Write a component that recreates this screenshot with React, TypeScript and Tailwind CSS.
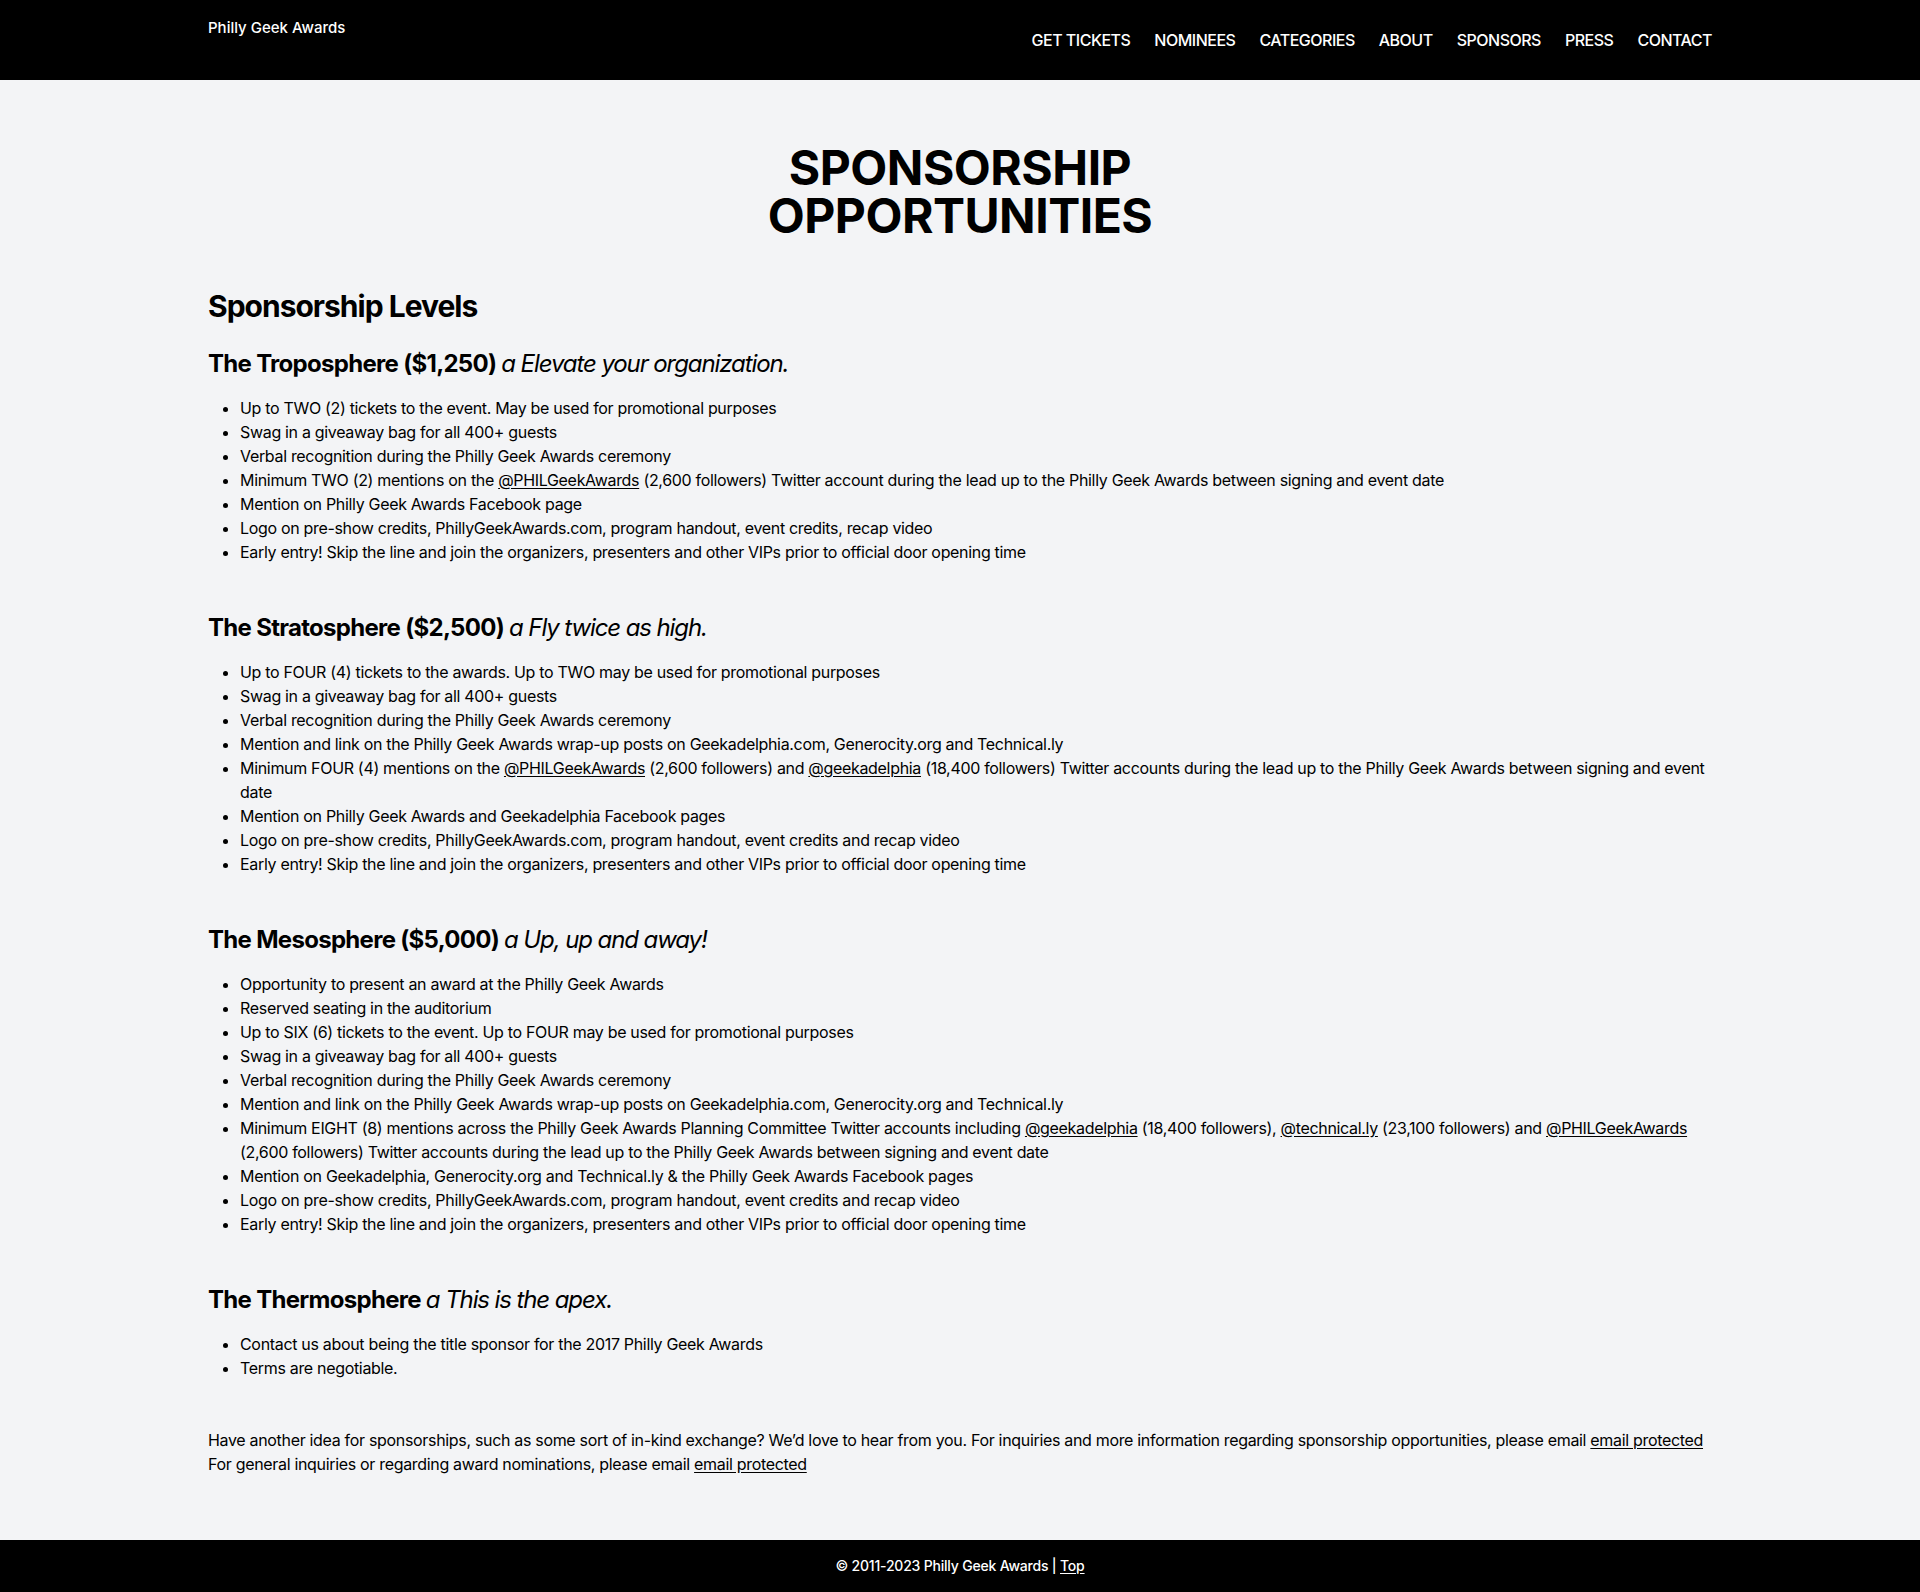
import type { ReactNode } from 'react';

const navLinks = ['GET TICKETS', 'NOMINEES', 'CATEGORIES', 'ABOUT', 'SPONSORS', 'PRESS', 'CONTACT'];

function A({ children }: { children: ReactNode }) {
  return (
    <a href="#" className="underline underline-offset-2">
      {children}
    </a>
  );
}

interface Level {
  name: string;
  tagline: string;
  perks: ReactNode[];
}

const levels: Level[] = [
  {
    name: 'The Troposphere ($1,250)',
    tagline: 'a Elevate your organization.',
    perks: [
      'Up to TWO (2) tickets to the event. May be used for promotional purposes',
      'Swag in a giveaway bag for all 400+ guests',
      'Verbal recognition during the Philly Geek Awards ceremony',
      <>
        Minimum TWO (2) mentions on the <A>@PHILGeekAwards</A> (2,600 followers) Twitter account during the lead up to
        the Philly Geek Awards between signing and event date
      </>,
      'Mention on Philly Geek Awards Facebook page',
      'Logo on pre-show credits, PhillyGeekAwards.com, program handout, event credits, recap video',
      'Early entry! Skip the line and join the organizers, presenters and other VIPs prior to official door opening time',
    ],
  },
  {
    name: 'The Stratosphere ($2,500)',
    tagline: 'a Fly twice as high.',
    perks: [
      'Up to FOUR (4) tickets to the awards. Up to TWO may be used for promotional purposes',
      'Swag in a giveaway bag for all 400+ guests',
      'Verbal recognition during the Philly Geek Awards ceremony',
      'Mention and link on the Philly Geek Awards wrap-up posts on Geekadelphia.com, Generocity.org and Technical.ly',
      <>
        Minimum FOUR (4) mentions on the <A>@PHILGeekAwards</A> (2,600 followers) and <A>@geekadelphia</A> (18,400
        followers) Twitter accounts during the lead up to the Philly Geek Awards between signing and event date
      </>,
      'Mention on Philly Geek Awards and Geekadelphia Facebook pages',
      'Logo on pre-show credits, PhillyGeekAwards.com, program handout, event credits and recap video',
      'Early entry! Skip the line and join the organizers, presenters and other VIPs prior to official door opening time',
    ],
  },
  {
    name: 'The Mesosphere ($5,000)',
    tagline: 'a Up, up and away!',
    perks: [
      'Opportunity to present an award at the Philly Geek Awards',
      'Reserved seating in the auditorium',
      'Up to SIX (6) tickets to the event. Up to FOUR may be used for promotional purposes',
      'Swag in a giveaway bag for all 400+ guests',
      'Verbal recognition during the Philly Geek Awards ceremony',
      'Mention and link on the Philly Geek Awards wrap-up posts on Geekadelphia.com, Generocity.org and Technical.ly',
      <>
        Minimum EIGHT (8) mentions across the Philly Geek Awards Planning Committee Twitter accounts including{' '}
        <A>@geekadelphia</A> (18,400 followers), <A>@technical.ly</A> (23,100 followers) and <A>@PHILGeekAwards</A>{' '}
        (2,600 followers) Twitter accounts during the lead up to the Philly Geek Awards between signing and event date
      </>,
      'Mention on Geekadelphia, Generocity.org and Technical.ly & the Philly Geek Awards Facebook pages',
      'Logo on pre-show credits, PhillyGeekAwards.com, program handout, event credits and recap video',
      'Early entry! Skip the line and join the organizers, presenters and other VIPs prior to official door opening time',
    ],
  },
  {
    name: 'The Thermosphere',
    tagline: 'a This is the apex.',
    perks: ['Contact us about being the title sponsor for the 2017 Philly Geek Awards', 'Terms are negotiable.'],
  },
];

export default function App() {
  return (
    <div className="min-h-screen flex flex-col bg-gray-100 text-black font-['Inter',sans-serif]">
      {/* header */}
      <header className="bg-black text-white">
        <div className="max-w-[1536px] mx-auto px-4 h-20 flex justify-between items-center">
          <a href="#" className="self-start pt-4 text-[15px] leading-6 font-medium">
            Philly Geek Awards
          </a>
          <nav className="flex items-center gap-6 text-base font-medium tracking-[-0.5px]">
            {navLinks.map((l) => (
              <a key={l} href="#">
                {l}
              </a>
            ))}
          </nav>
        </div>
      </header>

      <main className="flex-1 max-w-[1536px] w-full mx-auto px-4 py-16">
        <h1 className="text-5xl leading-none font-bold tracking-[-0.5px] text-center mb-12">
          SPONSORSHIP
          <br />
          OPPORTUNITIES
        </h1>

        <h2 className="text-3xl font-bold tracking-[-1px] mb-6">Sponsorship Levels</h2>

        {levels.map((lvl) => (
          <section key={lvl.name} className="mb-12">
            <h3 className="text-2xl font-bold tracking-[-0.7px] mb-4">
              {lvl.name} <em className="font-normal tracking-[-1.1px]">{lvl.tagline}</em>
            </h3>
            <ul className="list-disc pl-8 text-base leading-6 tracking-[-0.32px]">
              {lvl.perks.map((p, i) => (
                <li key={i}>{p}</li>
              ))}
            </ul>
          </section>
        ))}

        <p className="text-base leading-6 tracking-[-0.32px] whitespace-nowrap">
          Have another idea for sponsorships, such as some sort of in-kind exchange? We’d love to hear from you. For
          inquiries and more information regarding sponsorship opportunities, please email <A>email protected</A>
          <br />
          For general inquiries or regarding award nominations, please email <A>email protected</A>
        </p>
      </main>

      <footer className="bg-black text-white py-4 text-center text-sm leading-5 font-medium tracking-[-0.2px]">
        © 2011-2023 Philly Geek Awards | <A>Top</A>
      </footer>
    </div>
  );
}
